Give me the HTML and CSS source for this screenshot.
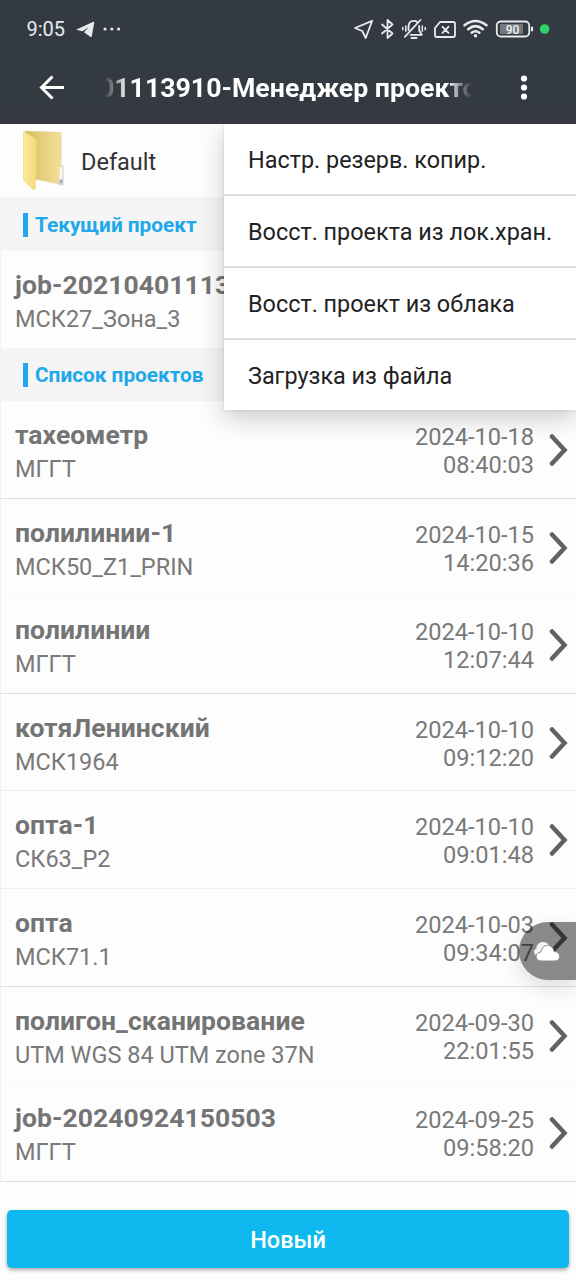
FILE: index.html
```html
<!DOCTYPE html>
<html lang="ru">
<head>
<meta charset="utf-8">
<title>Менеджер проектов</title>
<link rel="stylesheet" href="styles.css">
</head>
<body>
<svg class="defs" width="0" height="0">
  <defs>
    <symbol id="chevron" viewBox="0 0 20 34"><path d="M3 3.500 15.500 17 3 30.500" fill="none" stroke="#626262" stroke-width="4.500" stroke-linecap="round"/></symbol>
  </defs>
</svg>
<div class="screen">
  <header class="header">
    <div class="status">
      <span class="clock">9:05</span>
      <svg class="telegram" width="19" height="17" viewBox="0 0 19 17"><path d="M1 8.300 16.800 1 C17.800 .6 18.400 1 18.200 2 L15.800 15.200 C15.600 16.200 14.800 16.300 14.200 15.800 L8 11.300 12.500 6.300 6.500 10.300 1.100 9 C.4 8.900.4 8.500 1 8.300Z" fill="#e8ebee"/></svg>
      <svg class="dots" width="18" height="4" viewBox="0 0 18 4"><g fill="#e8ebee"><circle cx="2" cy="2" r="1.600"/><circle cx="8.800" cy="2" r="1.600"/><circle cx="15.600" cy="2" r="1.600"/></g></svg>
      <svg class="indicators" width="200" height="24" viewBox="352 17 200 24" fill="none" stroke="#e8ebee" stroke-width="1.800" stroke-linejoin="round" stroke-linecap="round">
        <path d="M372.200 20.800 355 28 362.300 31 365.700 38Z"/>
        <path d="M382 24.500 392.500 33.500 387.500 38V20L392.500 24.500 382 33.500"/>
        <path d="M408.500 30V27C408.500 23 410.500 20.800 413.800 20.800 415.200 20.800 416.300 21.200 417.200 22M419.200 26V30.500L421.800 34.800H410.500M420.500 20 404.800 36.800"/>
        <path d="M411.500 38H416.500" stroke-width="2"/>
        <path d="M405.800 26V31.200M402.800 27.500V29.700M422.300 26V31.200M425.200 27.500V29.700" stroke-width="1.500"/>
        <path d="M440 22H453.300Q455 22 455 23.700V35.300Q455 37 453.300 37H436.700Q435 37 435 35.300V28Z"/>
        <path d="M442.500 26.800 448.500 32.800M448.500 26.800 442.500 32.800" stroke-width="1.900"/>
        <path d="M464.500 25.300Q475.500 16.800 486.500 25.300M468.200 29.200Q475.500 23 482.800 29.200M471.700 32.800Q475.500 29.800 479.300 32.800" stroke-width="2.500"/>
        <circle cx="475.500" cy="35.800" r="1.700" fill="#e8ebee" stroke="none"/>
        <rect x="496.800" y="21.500" width="32.400" height="15" rx="4"/>
        <rect x="500" y="24" width="23" height="10" rx="1" fill="#747a80" stroke="none"/>
        <path d="M532 27.500V30.500" stroke-width="2.200"/>
        <text class="battery" x="512.500" y="33.600" text-anchor="middle">90</text>
        <circle cx="544.600" cy="29" r="4.800" fill="#2fd168" stroke="none"/>
      </svg>
    </div>
    <div class="bar">
      <svg class="back" width="28" height="28" viewBox="0 0 28 28"><path d="M14.500 2.500 3.500 13.500 14.500 24.500M3.500 13.500H26" fill="none" stroke="#fff" stroke-width="3"/></svg>
      <div class="title"><span class="title-text">01113910-Менеджер проектов</span></div>
      <svg class="more" width="8" height="26" viewBox="0 0 8 26"><g fill="#fff"><circle cx="4" cy="3.500" r="3.100"/><circle cx="4" cy="12.500" r="3.100"/><circle cx="4" cy="21.500" r="3.100"/></g></svg>
    </div>
  </header>

  <div class="folder">
    <svg width="44" height="62" viewBox="0 0 44 62">
      <defs>
        <linearGradient id="f1" x1="0" y1="0" x2="1" y2="0"><stop offset="0" stop-color="#fbe99c"/><stop offset="1" stop-color="#f3db78"/></linearGradient>
        <linearGradient id="f2" x1="0" y1="0" x2="1" y2="0"><stop offset="0" stop-color="#d2b965"/><stop offset=".4" stop-color="#e3cb78"/><stop offset="1" stop-color="#f3e095"/></linearGradient>
      </defs>
      <path d="M4 1 38.500 2.500Q40 2.600 40 4V52.500L39 54 14 49Z" fill="url(#f2)" stroke="#dfca84" stroke-width=".6"/>
      <path d="M39 36H42V54.500L38 55V51" fill="#f5f6f8" stroke="#c8c4b4" stroke-width=".8"/>
      <path d="M38.500 49.500H41.500V53.500H38.500Z" fill="#a5b0bd"/>
      <path d="M2.500 1.200 14 8.500Q15.300 9.500 15.300 11V46L14.300 48V59L12.500 60 2.500 50Z" fill="url(#f1)" stroke="#ead27a" stroke-width=".6"/>
    </svg>
    <span class="folder-name">Default</span>
  </div>

  <h2 class="section">Текущий проект</h2>
  <div class="row current"><div class="info"><b class="name">job-20210401113910</b><span class="crs">МСК27_Зона_3</span></div></div>
  <h2 class="section second">Список проектов</h2>

  <main class="list">
    <div class="row"><div class="info"><b class="name">тахеометр</b><span class="crs">МГГТ</span></div><div class="date">2024-10-18<br>08:40:03</div><svg class="go"><use href="#chevron"/></svg></div>
    <div class="row faint"><div class="info"><b class="name">полилинии-1</b><span class="crs">МСК50_Z1_PRIN</span></div><div class="date">2024-10-15<br>14:20:36</div><svg class="go"><use href="#chevron"/></svg></div>
    <div class="row"><div class="info"><b class="name">полилинии</b><span class="crs">МГГТ</span></div><div class="date">2024-10-10<br>12:07:44</div><svg class="go"><use href="#chevron"/></svg></div>
    <div class="row light"><div class="info"><b class="name">котяЛенинский</b><span class="crs">МСК1964</span></div><div class="date">2024-10-10<br>09:12:20</div><svg class="go"><use href="#chevron"/></svg></div>
    <div class="row light"><div class="info"><b class="name">опта-1</b><span class="crs">СК63_Р2</span></div><div class="date">2024-10-10<br>09:01:48</div><svg class="go"><use href="#chevron"/></svg></div>
    <div class="row"><div class="info"><b class="name">опта</b><span class="crs">МСК71.1</span></div><div class="date">2024-10-03<br>09:34:07</div><svg class="go"><use href="#chevron"/></svg></div>
    <div class="row faint"><div class="info"><b class="name">полигон_сканирование</b><span class="crs">UTM WGS 84 UTM zone 37N</span></div><div class="date">2024-09-30<br>22:01:55</div><svg class="go"><use href="#chevron"/></svg></div>
    <div class="row"><div class="info"><b class="name">job-20240924150503</b><span class="crs">МГГТ</span></div><div class="date">2024-09-25<br>09:58:20</div><svg class="go"><use href="#chevron"/></svg></div>
  </main>

  <footer class="footer"><button class="new">Новый</button></footer>

  <div class="menu-clip">
    <nav class="menu">
      <a class="item">Настр. резерв. копир.</a>
      <a class="item">Восст. проекта из лок.хран.</a>
      <a class="item">Восст. проект из облака</a>
      <a class="item">Загрузка из файла</a>
    </nav>
  </div>

  <div class="cloud">
    <svg width="30" height="24" viewBox="0 0 30 24">
      <path d="M5 16.500C1.500 15.500 1 11 4.500 9.500 4.500 5 8 2.500 11.500 3 14 3 16 4.500 17 6.500L10 17Z" fill="#f2f2f2"/>
      <path d="M9.500 22C2.500 22 2.500 13.500 9 13 10 4 21 4.500 22 12.500 29 12 29.500 22 23 22Z" fill="#fff" stroke="#8b8b8b" stroke-width="1"/>
    </svg>
  </div>
</div>
</body>
</html>
```
FILE: styles.css
```css
* { box-sizing: border-box; }
body { margin: 0; font-family: Roboto, "Noto Sans", sans-serif; background: #fdfdfd; }
.defs { position: absolute; }
.screen { position: relative; display: flex; flex-direction: column; width: 576px; height: 1280px; overflow: hidden; background: #fdfdfd; }

.header { flex: none; height: 124px; background: linear-gradient(#343a42 85%, #353841); color: #fff; }
.status { display: flex; align-items: center; height: 58px; padding-left: 26.500px; }
.clock { width: 40px; font-size: 20px; color: #e8ebee; white-space: nowrap; }
.telegram { margin-left: 9.500px; }
.dots { margin-left: 8px; }
.indicators { margin-left: auto; margin-right: 24px; }
.battery { font: 500 12px Roboto, sans-serif; fill: #f2f3f4; stroke: none; }
.bar { display: flex; align-items: center; height: 60px; padding-left: 38px; }
.title { width: 370px; margin-left: 38px; overflow: hidden; white-space: nowrap; -webkit-mask-image: linear-gradient(90deg, transparent, #000 24px, #000 342px, transparent 368px); mask-image: linear-gradient(90deg, transparent, #000 24px, #000 342px, transparent 368px); }
.title-text { margin-left: -5px; font-size: 26.700px; font-weight: 700; line-height: 36px; }
.more { margin-left: 46px; }

.folder { flex: none; display: flex; align-items: center; height: 73px; padding-left: 21px; }
.folder-name { margin-left: 16px; padding-top: 2px; font-size: 23.500px; color: #333; }

.section { flex: none; display: flex; align-items: center; height: 54px; margin: 0; padding: 1px 0 0 23px; background: #f5f5f5; color: #20a8ea; font-size: 20.800px; font-weight: 700; white-space: nowrap; }
.section.second { height: 53px; }
.section::before { content: ""; width: 5px; height: 24px; margin-right: 7px; background: #20a8ea; }

.row { flex: none; display: flex; height: 97.600px; padding: 18px 7px 0 14px; border-left: 1px solid #f2f2f2; border-bottom: 1px solid #dedede; }
.row.faint { border-bottom-color: #f8f8f8; }
.row.light { border-bottom-color: #ededed; }
.row.current { height: 97px; border-bottom: 0; }
.info { display: flex; flex-direction: column; flex: 1; white-space: nowrap; }
.name { font-size: 26.500px; line-height: 32px; font-weight: 700; letter-spacing: .06px; color: #747474; }
.crs { padding-top: 1px; font-size: 23.500px; line-height: 34px; color: #797979; }
.date { padding-top: 4px; font-size: 23.600px; line-height: 28px; color: #797979; text-align: right; }
.go { width: 20px; height: 34px; margin: 14px 0 0 15px; }
.list { flex: 1; min-height: 0; }

.footer { flex: none; height: 82px; padding: 12px 7px; background: #fdfdfd; }
.new { display: block; width: 562px; height: 58px; padding: 2px 0 0; border: 0; border-radius: 5px; background: #0eb9f0; box-shadow: 0 2px 4px rgba(0,0,0,.35); color: #fff; font: 500 23.500px Roboto, sans-serif; }

.menu-clip { position: absolute; top: 124px; right: 0; width: 400px; height: 350px; overflow: hidden; pointer-events: none; }
.menu { width: 352px; height: 286px; margin-left: 48px; background: #fff; box-shadow: 0 8px 24px rgba(0,0,0,.2), 0 0 3px rgba(0,0,0,.12); }
.item { display: flex; align-items: center; height: 72px; padding: 2px 0 0 24px; border-bottom: 2px solid #dcdcdc; font-size: 23.400px; color: #222; white-space: nowrap; }
.item:last-child { height: 70px; border: 0; }

.cloud { position: absolute; top: 922px; right: 0; display: flex; align-items: center; width: 57px; height: 58px; padding-left: 13px; border-radius: 29px 0 0 29px; background: rgba(0,0,0,.46); box-shadow: 0 8px 20px rgba(0,0,0,.12); }
```
